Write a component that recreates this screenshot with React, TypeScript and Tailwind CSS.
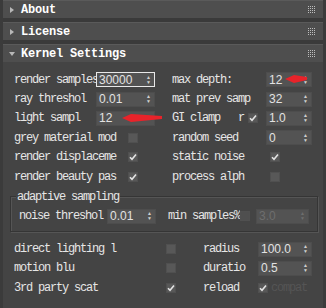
import React from 'react';

const mono = "font-['Liberation_Mono','DejaVu_Sans_Mono',monospace] text-[12px] tracking-[-1.2px]";
const num = "font-['Liberation_Sans',Arial,sans-serif] text-[12px]";

function Grip() {
  return (
    <div className="grid grid-cols-4 gap-[1px] mr-[8px]">
      {Array.from({ length: 16 }).map((_, i) => (
        <span key={i} className="w-[1px] h-[1px] bg-[#bdbdbd]" />
      ))}
    </div>
  );
}

function Header({ title, open }: { title: string; open?: boolean }) {
  return (
    <div className="h-[18px] bg-[#4e4e4e] border-t border-[#5a5a5a] flex items-center">
      <span className="w-[18px] pl-[6px] flex items-center">
        <svg width="6" height="6" viewBox="0 0 6 6">
          {open ? <path d="M0 1 L6 1 L3 5 Z" fill="#b8b8b8" /> : <path d="M1 0 L5 3 L1 6 Z" fill="#b8b8b8" />}
        </svg>
      </span>
      <span className="flex-1 font-['Liberation_Mono',monospace] font-bold text-[12px] tracking-[-0.2px] text-white">{title}</span>
      <Grip />
    </div>
  );
}

function Spin({ value, w, focus, dim, noSpin }: { value: string; w: string; focus?: boolean; dim?: boolean; noSpin?: boolean }) {
  return (
    <div className={`${w} h-[15px] flex items-center bg-[#535353] ${focus ? 'border border-[#e8e8e8]' : 'border border-[#4d4d4d]'}`}>
      <span className={`flex-1 pl-[2px] ${num} ${dim ? 'text-[#6e6e6e]' : 'text-[#e2e2e2]'} leading-none`}>{value}</span>
      {!noSpin && (
        <span className={`flex flex-col items-center pr-[3px] text-[5px] leading-[5px] ${dim ? 'text-[#6e6e6e]' : 'text-[#cfcfcf]'}`}>
          <span>▲</span>
          <span>▼</span>
        </span>
      )}
    </div>
  );
}

function Check({ on, dim }: { on?: boolean; dim?: boolean }) {
  return (
    <span className={`w-[10px] h-[10px] flex items-center justify-center ${dim ? 'bg-[#4f4f4f]' : 'bg-[#585858]'} border border-[#505050]`}>
      {on && (
        <svg width="8" height="8" viewBox="0 0 8 8">
          <path d="M1 4.2 L3 6.2 L7 1.5" stroke="#e4e4e4" strokeWidth="1.6" fill="none" />
        </svg>
      )}
    </span>
  );
}

function Label({ text, w }: { text: string; w: string }) {
  return <span className={`${w} overflow-hidden whitespace-pre ${mono} text-[#e6e6e6]`}>{text}</span>;
}

function Arrow({ w }: { w: number }) {
  return (
    <svg width={w} height="10" viewBox={`0 0 ${w} 10`} className="absolute">
      <path d={`M0 5 L9 1 L${w} 3 L${w} 6 L9 9 Z`} fill="#e8232a" />
    </svg>
  );
}

export default function App() {
  return (
    <div className="w-[326px] h-[308px] bg-[#444444] overflow-hidden border-l-[3px] border-r-[3px] border-[#3b3b3b] relative">
      <Header title="About" />
      <div className="h-[4px] bg-[#3a3a3a]" />
      <Header title="License" />
      <div className="h-[4px] bg-[#3a3a3a]" />
      <Header title="Kernel Settings" open />

      <div className="pt-[8px] pl-[11px] flex">
        {/* left column */}
        <div className="w-[158px] flex flex-col">
          <div className="h-[19.4px] flex items-center">
            <Label text="render samples" w="w-[82px]" />
            <Spin value="30000" w="w-[59px]" focus />
          </div>
          <div className="h-[19.4px] flex items-center">
            <Label text="ray threshol" w="w-[82px]" />
            <Spin value="0.01" w="w-[59px]" />
          </div>
          <div className="h-[19.4px] flex items-center relative">
            <Label text="light sampl" w="w-[82px]" />
            <Spin value="12" w="w-[59px]" noSpin />
            <div className="absolute left-[108px] top-[4px]">
              <Arrow w={40} />
            </div>
          </div>
          <div className="h-[19.4px] flex items-center">
            <Label text="grey material mod" w="w-[114px]" />
            <Check />
          </div>
          <div className="h-[19.4px] flex items-center">
            <Label text="render displaceme" w="w-[114px]" />
            <Check on />
          </div>
          <div className="h-[19.4px] flex items-center">
            <Label text="render beauty pas" w="w-[114px]" />
            <Check on />
          </div>
        </div>
        {/* right column */}
        <div className="w-[150px] flex flex-col">
          <div className="h-[19.4px] flex items-center relative">
            <Label text="max depth:" w="w-[94px]" />
            <Spin value="12" w="w-[46px]" />
            <div className="absolute left-[113px] top-[4px]">
              <Arrow w={22} />
            </div>
          </div>
          <div className="h-[19.4px] flex items-center">
            <Label text="mat prev samp" w="w-[94px]" />
            <Spin value="32" w="w-[46px]" />
          </div>
          <div className="h-[19.4px] flex items-center">
            <Label text="GI clamp   r" w="w-[76px]" />
            <span className="w-[18px] flex"><Check on /></span>
            <Spin value="1.0" w="w-[46px]" />
          </div>
          <div className="h-[19.4px] flex items-center">
            <Label text="random seed" w="w-[94px]" />
            <Spin value="0" w="w-[46px]" />
          </div>
          <div className="h-[19.4px] flex items-center">
            <Label text="static noise" w="w-[98px]" />
            <Check on />
          </div>
          <div className="h-[19.4px] flex items-center">
            <Label text="process alph" w="w-[98px]" />
            <Check />
          </div>
        </div>
      </div>

      {/* group box */}
      <div className="ml-[7px] mr-[5px] mt-[10px] relative border border-[#353535] shadow-[inset_1px_1px_0_#555,1px_1px_0_#555] h-[36px]">
        <span className={`absolute -top-[9px] left-[5px] bg-[#444444] px-[1px] ${mono} text-[#e6e6e6]`}>adaptive sampling</span>
        <div className="pt-[10px] pl-[8px] flex items-center">
          <Label text="noise threshol" w="w-[88px]" />
          <Spin value="0.01" w="w-[49px]" />
          <span className="w-[12px]" />
          <Label text="min samples%" w="w-[72px]" />
          <span className="w-[16px] flex"><Check dim /></span>
          <Spin value="3.0" w="w-[53px]" dim />
        </div>
      </div>

      <div className="pt-[7px] pl-[11px] flex flex-col">
        <div className="h-[19.4px] flex items-center">
          <Label text="direct lighting l" w="w-[152px]" />
          <Check />
          <span className="w-[27px]" />
          <Label text="radius" w="w-[55px]" />
          <Spin value="100.0" w="w-[54px]" />
        </div>
        <div className="h-[19.4px] flex items-center">
          <Label text="motion blu" w="w-[152px]" />
          <Check />
          <span className="w-[27px]" />
          <Label text="duratio" w="w-[55px]" />
          <Spin value="0.5" w="w-[54px]" />
        </div>
        <div className="h-[19.4px] flex items-center">
          <Label text="3rd party scat" w="w-[152px]" />
          <Check on />
          <span className="w-[27px]" />
          <Label text="reload" w="w-[55px]" />
          <Check on />
          <span className={`ml-[3px] ${mono} text-[#555555]`}>compat</span>
        </div>
      </div>
    </div>
  );
}
